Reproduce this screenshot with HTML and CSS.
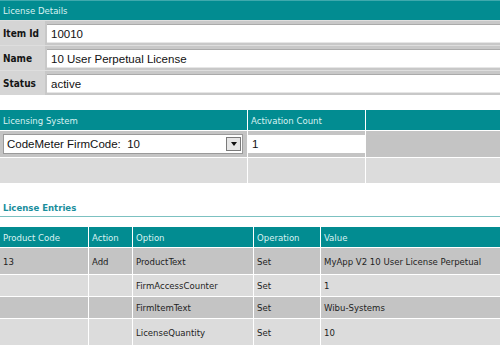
FILE: index.html
```html
<!DOCTYPE html>
<html lang="en">
<head>
    <meta charset="UTF-8" />
    <meta name="viewport" content="width=device-width, initial-scale=1.0" />
    <title>License Details</title>
    <link rel="stylesheet" href="styles.css">
</head>
<body>
    <!-- License details -->
    <div class="details">
        <div class="bar">License Details</div>
        <div class="field">
            <div class="field-label">Item Id</div>
            <div class="field-value"><input class="text-input" type="text" value="10010"></div>
        </div>
        <div class="field">
            <div class="field-label">Name</div>
            <div class="field-value"><input class="text-input" type="text" value="10 User Perpetual License"></div>
        </div>
        <div class="field">
            <div class="field-label">Status</div>
            <div class="field-value"><input class="text-input" type="text" value="active"></div>
        </div>
    </div>

    <!-- Licensing system -->
    <table class="grid system">
        <tr class="head">
            <th class="col-system">Licensing System</th>
            <th class="col-count">Activation Count</th>
            <th></th>
        </tr>
        <tr class="row-dark">
            <td>
                <div class="select">
                    <span class="select-text">CodeMeter FirmCode:&nbsp; 10</span>
                    <span class="select-button"><span class="arrow"></span></span>
                </div>
            </td>
            <td><input class="text-input count-input" type="text" value="1"></td>
            <td></td>
        </tr>
        <tr class="row-light">
            <td></td>
            <td></td>
            <td></td>
        </tr>
    </table>

    <h3 class="section-title">License Entries</h3>

    <table class="grid entries">
        <tr class="head">
            <th class="col-code">Product Code</th>
            <th class="col-action">Action</th>
            <th class="col-option">Option</th>
            <th class="col-operation">Operation</th>
            <th>Value</th>
        </tr>
        <tr class="row-dark tall">
            <td>13</td>
            <td>Add</td>
            <td>ProductText</td>
            <td>Set</td>
            <td>MyApp V2 10 User License Perpetual</td>
        </tr>
        <tr class="row-light short">
            <td></td>
            <td></td>
            <td>FirmAccessCounter</td>
            <td>Set</td>
            <td>1</td>
        </tr>
        <tr class="row-dark short">
            <td></td>
            <td></td>
            <td>FirmItemText</td>
            <td>Set</td>
            <td>Wibu-Systems</td>
        </tr>
        <tr class="row-light tall">
            <td></td>
            <td></td>
            <td>LicenseQuantity</td>
            <td>Set</td>
            <td>10</td>
        </tr>
    </table>
</body>
</html>
```

FILE: styles.css
```css
body {
    margin: 0;
    background: #fff;
    font-family: "DejaVu Sans Condensed", "DejaVu Sans", sans-serif;
    font-size: 9.5px;
    color: #1e1e1e;
    width: 500px;
    overflow: hidden;
}
.bar {
    height: 19px;
    line-height: 20px;
    background: #028c91;
    border-top: 1px solid #3fa9ad;
    color: #d9f2f2;
    padding-left: 3px;
}
.field {
    display: flex;
    height: 24px;
    background: #c8c8c8;
    border-top: 1px solid #dedede;
}
.field-label {
    width: 42px;
    padding-left: 3px;
    background: #d5d5d5;
    font-weight: bold;
    font-size: 10px;
    display: flex;
    align-items: center;
    color: #141414;
}
.field-value {
    flex: 1;
    padding: 3px 0 2px 2px;
}
.text-input {
    box-sizing: border-box;
    width: 100%;
    height: 19px;
    margin: 0;
    border: none;
    border-top: 1px solid #aaa;
    border-bottom: 1px solid #e6e6e6;
    background: #fff;
    padding: 0 4px;
    font-family: "Liberation Sans", Arial, sans-serif;
    font-size: 11.5px;
    color: #111;
    outline: none;
}
.grid {
    width: 500px;
    border-collapse: collapse;
    table-layout: fixed;
}
.grid th,
.grid td {
    padding: 0 0 0 3px;
    border-right: 1px solid #fff;
    border-bottom: 1px solid #fff;
    text-align: left;
    font-weight: normal;
    vertical-align: middle;
    white-space: nowrap;
    overflow: hidden;
}
.grid th:last-child,
.grid td:last-child {
    border-right: none;
}
.grid .head th {
    background: #028c91;
    color: #d9f2f2;
    height: 20px;
}
.row-dark td {
    background: #c4c4c4;
}
.row-light td {
    background: #dcdcdc;
}
.system {
    margin-top: 15px;
}
.system .col-system {
    width: 244px;
}
.system .col-count {
    width: 114px;
}
.system .row-dark td {
    height: 26px;
}
.system .row-light td {
    height: 25px;
}
.system .row-dark td:nth-child(2) {
    padding: 0;
}
.select {
    display: flex;
    align-items: center;
    height: 18px;
    background: #fff;
    border: 1px solid #9a9a9a;
    margin-right: 4px;
    font-family: "Liberation Sans", Arial, sans-serif;
    font-size: 11.5px;
    color: #111;
}
.select-text {
    flex: 1;
    padding-left: 3px;
}
.select-button {
    box-sizing: border-box;
    width: 15px;
    height: 14px;
    margin-right: 1px;
    background: #e6e6e6;
    border: 1px solid #7a7a7a;
    display: flex;
    align-items: center;
    justify-content: center;
}
.arrow {
    width: 0;
    height: 0;
    border-left: 3px solid transparent;
    border-right: 3px solid transparent;
    border-top: 4px solid #111;
}
.count-input {
    height: 18px;
    border: none;
}
.section-title {
    margin: 18px 0 0;
    padding: 0 0 3px 3px;
    font-size: 9.5px;
    font-weight: bold;
    color: #1a8e9c;
    border-bottom: 1px solid #7cc1c1;
}
.entries {
    margin-top: 10px;
}
.entries .col-code {
    width: 85px;
}
.entries .col-action {
    width: 40px;
}
.entries .col-option {
    width: 117px;
}
.entries .col-operation {
    width: 63px;
}
.entries .tall td {
    height: 26px;
}
.entries .short td {
    height: 21px;
}
```
